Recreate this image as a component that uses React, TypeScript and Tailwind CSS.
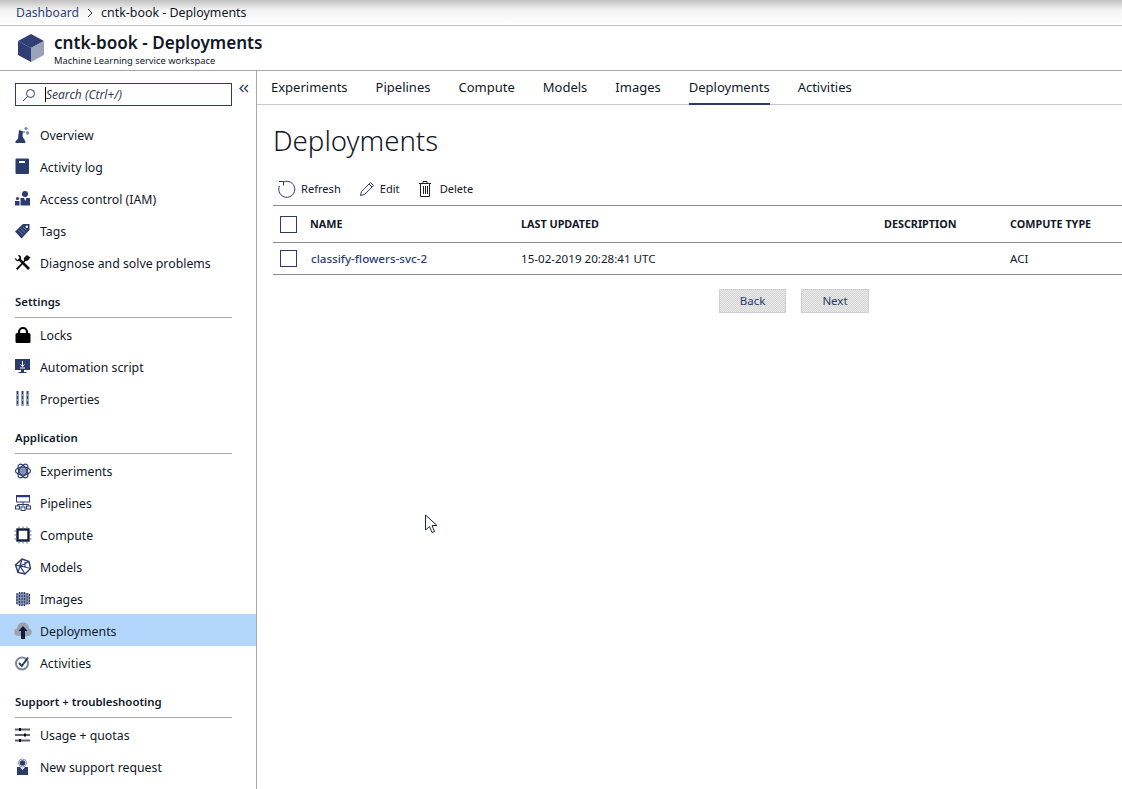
import React from "react";

const Ic = ({ children, size = 18 }: { children: React.ReactNode; size?: number }) => (
  <svg width={size} height={size} viewBox="0 0 18 18" className="shrink-0">{children}</svg>
);

const N = "#2a3b6e";
const icons: Record<string, React.ReactNode> = {
  overview: <Ic><path d="M5 4l4 1.500-.5 5 3 5-.5 1.500H2l-1-1 3-3.500z" fill={N} /><circle cx="12" cy="2.500" r="1.600" fill="#7f8cab" /><circle cx="13.500" cy="7" r="1.800" fill="#7f8cab" /><circle cx="10" cy="6" r="1" fill="#7f8cab" /></Ic>,
  log: <Ic><rect x="1.500" y="0.500" width="13.500" height="15.500" rx="1" fill={N} /><rect x="5" y="3" width="6" height="2" fill="#fff" /></Ic>,
  iam: <Ic><circle cx="11" cy="4" r="3" fill={N} /><path d="M6.500 8h9.500v7.500H6.500z" fill={N} /><path d="M10 8l1.200 3 1.200-3z" fill="#fff" /><circle cx="3.500" cy="8.500" r="1.600" fill={N} /><path d="M1 11h4.500v4.500H1z" fill={N} /></Ic>,
  tags: <Ic><path d="M1 9.500L9 2h6.500v6l-8 8.500z" fill={N} /><path d="M5 8.500l4 4M7 6.500l4 4M9 5l3.500 3.500" stroke="#8c98b8" strokeWidth="0.800" /><circle cx="12.800" cy="4.800" r="1.200" fill="#fff" /></Ic>,
  tools: <Ic><path d="M4 1C6.500 0.800 7.800 3 7 5.200L16 14l-2 2-8.800-9C3 7.800 0.800 6.300 1 3.800L3.500 6 5.500 4z" fill="#111" /><path d="M2 14.500L10 6.500 9.800 4 13 1l3.500 2.500-3 3.200L11.500 7 3.500 16z" fill="#111" /></Ic>,
  lock: <Ic><path d="M5 8V6a4 4 0 0 1 8 0v2" stroke="#000" strokeWidth="2.200" fill="none" /><rect x="1.500" y="7" width="15" height="10" rx="1.500" fill="#000" /></Ic>,
  script: <Ic><rect x="1" y="1" width="15" height="11" fill={N} /><path d="M8.500 3v5.500M6.500 6.500l2 2 2-2M6 10h5" stroke="#fff" fill="none" /><path d="M7 12h3v2h2.500v1h-8v-1H7z" fill={N} /></Ic>,
  props: <Ic><path d="M3.500 1v15M8.500 1v15M13.500 1v15" stroke="#98a3bd" strokeWidth="3" /><path d="M3.500 1v15M8.500 1v15M13.500 1v15" stroke={N} strokeWidth="1" strokeDasharray="3 2" /></Ic>,
  exp: <Ic><g stroke={N} fill="none" strokeWidth="1.200"><ellipse cx="9" cy="9" rx="7.500" ry="3.800" /><ellipse cx="9" cy="9" rx="7.500" ry="3.800" transform="rotate(60 9 9)" /><ellipse cx="9" cy="9" rx="7.500" ry="3.800" transform="rotate(120 9 9)" /></g><circle cx="9" cy="9" r="3" fill="#7f8ca8" /></Ic>,
  pipe: <Ic><rect x="2.500" y="1.500" width="13" height="6.500" fill="none" stroke={N} /><path d="M2.500 2.500h13" stroke={N} strokeWidth="1.500" /><path d="M9 8v4M3.500 12V10.500h11V12" stroke={N} fill="none" /><rect x="1.500" y="12" width="4" height="3" fill="none" stroke={N} /><rect x="7" y="13" width="4" height="3.500" fill="none" stroke={N} /><rect x="12.500" y="12" width="4" height="3" fill="none" stroke={N} /></Ic>,
  compute: <Ic><rect x="3.500" y="3.500" width="11" height="11" fill="none" stroke="#0f1a3c" strokeWidth="2.400" /><path d="M5 0.500v2M9 0.500v2M13 0.500v2M5 15.500v2M9 15.500v2M13 15.500v2M0.500 5h2M0.500 9h2M0.500 13h2M15.500 5h2M15.500 9h2M15.500 13h2" stroke="#5e6a8c" /></Ic>,
  models: <Ic><path d="M8 1l7 2.500 1.500 7L11 16l-7-1.500L1.500 7z" fill="#fff" stroke={N} strokeWidth="1.400" /><path d="M8 1L6 8l5 8M1.500 7L6 8l9-4.500M6 8l-2 6.500M11 9l5.500 1.500M6 8l5 1 0-5" fill="none" stroke={N} strokeWidth="1.200" /></Ic>,
  images: <Ic><path d="M2 4l6-2 8 2v10l-8 2-6-2z" fill="#8893b0" /><path d="M3 3v12M5.500 2v14M8 2v14M10.500 2v14M13 3v12M15.500 4v10" stroke={N} strokeWidth="1.100" strokeDasharray="2 1" /></Ic>,
  deploy: <Ic><path d="M4 14a4 4 0 0 1-1-7.800 6 6 0 0 1 12 0A4 4 0 0 1 14 14z" fill="#9aa2b2" /><path d="M9 4l4.500 5H11v8H7V9H4.500z" fill="#0f1a3c" /></Ic>,
  act: <Ic><circle cx="8" cy="9.500" r="6" fill="#fff" stroke="#7f8696" strokeWidth="2" /><path d="M5 9l2.800 3L14 3.500" stroke={N} strokeWidth="2" fill="none" /></Ic>,
  usage: <Ic><path d="M1 3.500h15M1 9h15M1 14.500h15" stroke="#5a6172" strokeWidth="2" /><path d="M6 2v3M11 7.500v3M6 13v3" stroke="#000" strokeWidth="2" /></Ic>,
  support: <Ic><circle cx="8.500" cy="5" r="4" fill="#fff" stroke="#7f8ca8" /><circle cx="8.500" cy="5" r="2.800" fill={N} /><path d="M3 9h3l2.500 3L11 9h3v8H3z" fill={N} /></Ic>,
};

const Item = ({ icon, label, active }: { icon: string; label: string; active?: boolean }) => (
  <div className={`flex h-8 items-center pt-[2px] pl-[14px] ${active ? "bg-[#b3d7fb]" : ""}`}>
    <span className="flex w-[26px]">{icons[icon]}</span>
    <span className="pt-[2px]">{label}</span>
  </div>
);

const Heading = ({ label }: { label: string }) => (
  <div className="mx-[15px] flex h-[40px] w-[217px] items-end border-b border-[#a8a8a8] pb-[7px] text-[11.4px] font-semibold">
    {label}
  </div>
);

const tabs = ["Experiments", "Pipelines", "Compute", "Models", "Images", "Deployments", "Activities"];

export default function App() {
  return (
    <div className="relative flex h-[789px] w-[1122px] flex-col overflow-hidden bg-white text-[12.3px] text-[#111827] [font-family:'Noto_Sans','Open_Sans',sans-serif]">
      <div className="flex h-[26px] shrink-0 items-center gap-[7px] border-b border-[#c4c4c4] bg-gradient-to-b from-[#c0c0c0] via-[#f4f4f4] via-40% to-white pl-4 pt-px text-[12.2px]">
        <span className="text-[#2c4478]">Dashboard</span>
        <svg width="8" height="10" viewBox="0 0 8 10"><path d="M2 1l4 4-4 4" fill="none" stroke="#333" /></svg>
        <span className="text-[12.4px]">cntk-book - Deployments</span>
      </div>

      <div className="flex h-[45px] shrink-0 items-center border-b border-[#a8a8a8] pl-[17px]">
        <svg width="28" height="30" viewBox="0 0 28 30" className="shrink-0">
          <path d="M14 1l13 7-13 7L1 8z" fill="#2f3f76" />
          <path d="M1 8l13 7v14L1 22z" fill="#2f3f76" />
          <path d="M27 8l-13 7v14l13-7z" fill="#9aa1b8" />
        </svg>
        <div className="ml-[9px] flex flex-col pt-[2px]">
          <span className="text-[17.1px] leading-[22px] font-semibold">cntk-book - Deployments</span>
          <span className="text-[9.35px] leading-[13px]">Machine Learning service workspace</span>
        </div>
      </div>

      <div className="flex min-h-0 flex-1">
        <aside className="w-[257px] shrink-0 border-r border-[#a8a8a8]">
          <div className="flex h-[47px] items-start pt-3 pl-[15px]">
            <div className="flex h-[23px] w-[217px] items-center border border-[#2a3b6e] pl-[6px]">
              <svg width="14" height="14" viewBox="0 0 14 14"><circle cx="8.500" cy="5.500" r="4" fill="none" stroke="#2a3b6e" /><path d="M5.500 8.500L1 13" stroke="#2a3b6e" /></svg>
              <span className="ml-[9px] h-[15px] w-px bg-black" />
              <span className="text-[12px] italic text-[#374151]">Search (Ctrl+/)</span>
            </div>
            <svg width="10" height="10" viewBox="0 0 10 10" className="mt-px ml-[7px]"><path d="M4.500 1L1 4.500 4.500 8M9 1L5.500 4.500 9 8" fill="none" stroke="#2a3b6e" strokeWidth="1.300" /></svg>
          </div>
          <Item icon="overview" label="Overview" />
          <Item icon="log" label="Activity log" />
          <Item icon="iam" label="Access control (IAM)" />
          <Item icon="tags" label="Tags" />
          <Item icon="tools" label="Diagnose and solve problems" />
          <Heading label="Settings" />
          <Item icon="lock" label="Locks" />
          <Item icon="script" label="Automation script" />
          <Item icon="props" label="Properties" />
          <Heading label="Application" />
          <Item icon="exp" label="Experiments" />
          <Item icon="pipe" label="Pipelines" />
          <Item icon="compute" label="Compute" />
          <Item icon="models" label="Models" />
          <Item icon="images" label="Images" />
          <Item icon="deploy" label="Deployments" active />
          <Item icon="act" label="Activities" />
          <Heading label="Support + troubleshooting" />
          <Item icon="usage" label="Usage + quotas" />
          <Item icon="support" label="New support request" />
        </aside>

        <main className="min-w-0 flex-1">
          <div className="flex h-[34px] items-stretch gap-7 border-b border-[#c8c8c8] pl-[14px] text-[13px]">
            {tabs.map((t) => (
              <div key={t} className={`flex items-center border-b-2 pt-[2px] ${t === "Deployments" ? "-mb-px border-[#2a3b6e]" : "border-transparent"}`}>{t}</div>
            ))}
          </div>
          <div className="pl-4">
            <h1 className="mt-[16px] text-[27.6px] leading-[38px] font-light">Deployments</h1>
            <div className="mt-[16px] mb-[2px] flex h-[28px] items-center pl-[5px] text-[11.1px]">
              <svg width="18" height="18" viewBox="0 0 18 18"><path d="M5.500 2a8 8 0 1 1-4 4M1 1.500h4.500V5.500" fill="none" stroke="#2a3b6e" /></svg>
              <span className="ml-[5px]">Refresh</span>
              <svg width="16" height="16" viewBox="0 0 16 16" className="ml-[18px]"><path d="M1.500 14.500l1-4L11.500 1.500l3 3-9 9z M10 3l3 3" fill="none" stroke="#2a3b6e" /></svg>
              <span className="ml-[5px]">Edit</span>
              <svg width="14" height="18" viewBox="0 0 14 18" className="ml-[18px]"><path d="M1 3.500h12M5 3.500V1.500h4v2M2.500 3.500v13h9v-13M5.500 6v8M7.500 6v8M9.500 6v8" fill="none" stroke="#222" /></svg>
              <span className="ml-[8px]">Delete</span>
            </div>
            <div className="flex h-[38px] items-center border-t border-b border-[#8e8e8e] text-[10.8px] font-bold">
              <Cols name="NAME" last="LAST UPDATED" desc="DESCRIPTION" type="COMPUTE TYPE" />
            </div>
            <div className="flex h-[32px] items-center border-b border-[#8e8e8e] text-[11.6px]">
              <Cols name={<span className="pl-px font-medium text-[#2a3f78]">classify-flowers-svc-2</span>} last="15-02-2019 20:28:41 UTC" desc="" type="ACI" />
            </div>
            <div className="mt-[14px] flex pl-[446px] text-[11.5px] text-[#2a3b6e]">
              <button className="h-[24px] w-[67px] border border-[#cfcfcf] bg-[repeating-conic-gradient(#d4d4d4_0_25%,#ececec_0_50%)] bg-[length:2px_2px]">Back</button>
              <button className="ml-[15px] h-[24px] w-[68px] border border-[#cfcfcf] bg-[repeating-conic-gradient(#d4d4d4_0_25%,#ececec_0_50%)] bg-[length:2px_2px]">Next</button>
            </div>
          </div>
        </main>
      </div>

      <svg width="15" height="20" viewBox="0 0 15 20" className="absolute top-[514px] left-[424px]">
        <path d="M1.500 1v15l4-3.500 2.500 6 2.500-1-2.500-6h5z" fill="#fff" stroke="#1f2937" />
      </svg>
    </div>
  );
}

function Cols({ name, last, desc, type }: { name: React.ReactNode; last: string; desc: string; type: string }) {
  return (
    <>
      <span className="ml-[7px] h-[17px] w-[17px] shrink-0 border border-[#2a3b6e]" />
      <span className="ml-[13px] w-[211px] shrink-0">{name}</span>
      <span className="w-[363px] shrink-0">{last}</span>
      <span className="w-[126px] shrink-0">{desc}</span>
      <span>{type}</span>
    </>
  );
}
